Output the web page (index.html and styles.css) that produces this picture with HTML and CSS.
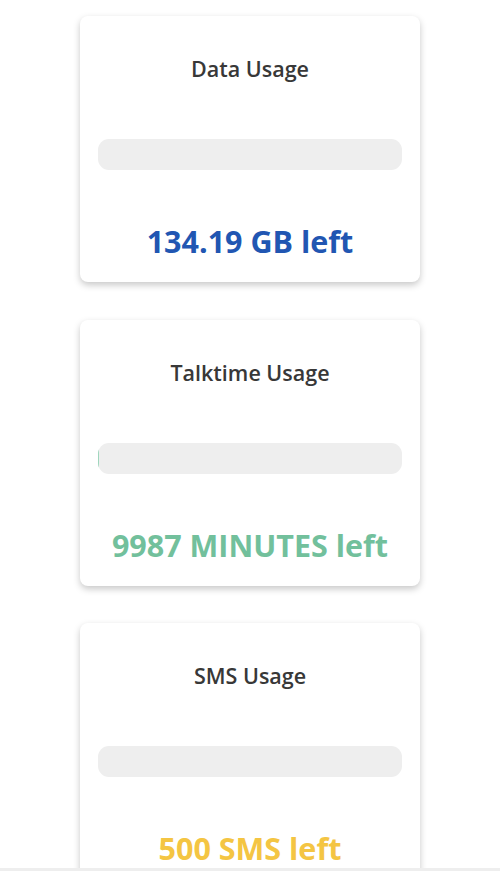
FILE: index.html
```
<!DOCTYPE html>
<html lang="en">
<head>
    <meta charset="UTF-8">
    <meta name="viewport" content="width=device-width, initial-scale=1.0">
    <title>Usage</title>
    <link rel="stylesheet" href="styles.css">
</head>
<body>
    <div class="usage-list">

        <div class="usage-card">
            <h3 class="usage-title">Data Usage</h3>
            <div class="usage-bar">
                <span class="usage-fill fill-data" style="width: 0%;"></span>
            </div>
            <div class="usage-left data-left">134.19 GB left</div>
        </div>

        <div class="usage-card">
            <h3 class="usage-title">Talktime Usage</h3>
            <div class="usage-bar">
                <span class="usage-fill fill-talk" style="width: 0.4%;"></span>
            </div>
            <div class="usage-left talk-left">9987 MINUTES left</div>
        </div>

        <div class="usage-card">
            <h3 class="usage-title">SMS Usage</h3>
            <div class="usage-bar">
                <span class="usage-fill fill-sms" style="width: 0%;"></span>
            </div>
            <div class="usage-left sms-left">500 SMS left</div>
        </div>

    </div>
    <div class="bottom-edge"></div>
</body>
</html>
```

FILE: styles.css
```
body {
    font-family: "Open Sans", sans-serif;
    margin: 0;
    padding: 0;
    background-color: #ffffff;
}

.usage-list {
    display: flex;
    flex-direction: column;
    align-items: center;
    gap: 37.5px;
    padding: 16px 0 40px;
}

.usage-card {
    width: 340px;
    box-sizing: border-box;
    padding: 39px 18px 21px;
    background-color: white;
    border-radius: 8px;
    box-shadow: 0 3px 7px rgba(0, 0, 0, 0.22);
    display: flex;
    flex-direction: column;
    text-align: center;
}

.usage-title {
    margin: 0;
    font-size: 21.5px;
    line-height: 28px;
    font-weight: 600;
    color: #383838;
}

.usage-bar {
    margin-top: 56px;
    height: 31px;
    border-radius: 11px;
    background-color: #eeeeee;
    overflow: hidden;
    display: flex;
}

.usage-fill {
    display: block;
    height: 100%;
}

.fill-data { background-color: #2156b2; }
.fill-talk { background-color: #9fd6bd; }
.fill-sms { background-color: #f4c543; }

.usage-left {
    margin-top: 51px;
    font-size: 30.5px;
    line-height: 40px;
    font-weight: 700;
}

.data-left { color: #2156b2; }
.talk-left { color: #72c09c; }
.sms-left { color: #f4c543; }

.bottom-edge {
    position: fixed;
    left: 0;
    right: 0;
    bottom: 0;
    height: 3px;
    background-color: #eeeeee;
}
```
